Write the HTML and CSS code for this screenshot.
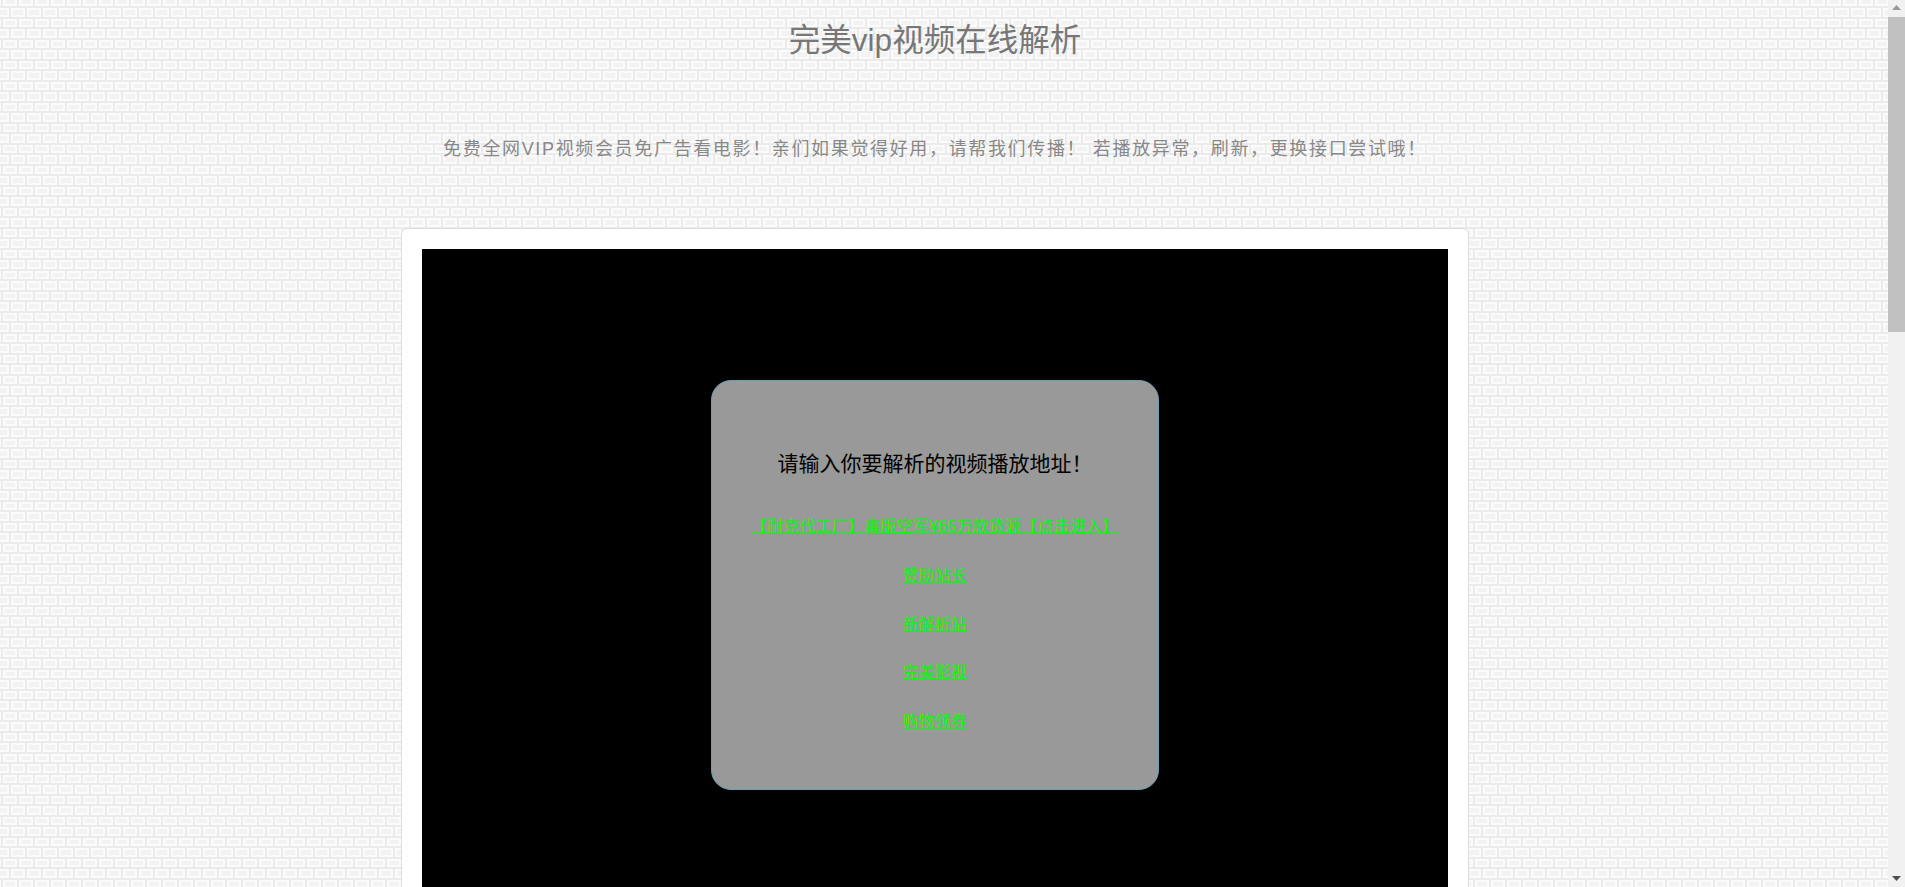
FILE: index.html
```html
<!DOCTYPE html>
<html lang="zh-CN">

<head>
    <meta charset="UTF-8">
    <meta name="viewport" content="width=device-width, initial-scale=1.0">
    <title>完美vip视频在线解析</title>
    <link rel="stylesheet" href="styles.css">
</head>

<body>
    <div class="wrap">
        <h1 class="title">完美vip视频在线解析</h1>
        <p class="desc">免费全网VIP视频会员免广告看电影！亲们如果觉得好用，请帮我们传播！ 若播放异常，刷新，更换接口尝试哦！</p>
        <div class="card">
            <div class="player">
                <div class="notice">
                    <h2 class="notice-title">请输入你要解析的视频播放地址！</h2>
                    <a href="#" class="notice-link">【耐克代工厂】毒版空军¥65万款货源【点击进入】</a>
                    <a href="#" class="notice-link">赞助站长</a>
                    <a href="#" class="notice-link">新解析站</a>
                    <a href="#" class="notice-link">完美影视</a>
                    <a href="#" class="notice-link">购物领券</a>
                </div>
            </div>
        </div>
    </div>
    <!-- 截图里的滚动条 -->
    <div class="scrollbar">
        <svg class="scroll-arrow" width="17" height="17" viewBox="0 0 17 17"><path d="M8.5 5L13 10H4z" fill="#999"/></svg>
        <div class="scroll-thumb"></div>
        <div class="scroll-rest"></div>
        <svg class="scroll-arrow" width="17" height="17" viewBox="0 0 17 17"><path d="M4 6H13L8.5 11z" fill="#505050"/></svg>
    </div>
</body>

</html>
```

FILE: styles.css
```css
* {
    padding: 0;
    margin: 0;
    box-sizing: border-box;
}

body {
    font-family: "Liberation Sans", "Noto Sans CJK SC", sans-serif;
    background-color: #f3f3f3;
    /* 砖墙底纹 */
    background-image: url("data:image/svg+xml,%3Csvg xmlns='http://www.w3.org/2000/svg' width='32' height='21'%3E%3Cpath d='M0 0H32V21H0z' fill='%23ebebeb'/%3E%3Cpath d='M11 8H25V17H11zM27 8H32V17H27zM0 8H9V17H0zM3 19H17V21H3zM19 19H32V21H19zM3 0H17V6H3zM19 0H32V6H19zM0 0H1V6H0zM0 19H1V21H0z' fill='%23fbfbfb'/%3E%3Cpath d='M13 10H23V15H13zM29 10H32V15H29zM0 10H7V15H0zM5 0H15V4H5zM21 0H31V4H21z' fill='%23f3f3f3'/%3E%3C/svg%3E");
}

.wrap {
    width: 1870px;
    padding-top: 20px;
    display: flex;
    flex-direction: column;
    align-items: center;
}

.title {
    font-size: 31.5px;
    font-weight: normal;
    line-height: 40px;
    color: #777;
}

.desc {
    margin-top: 69px;
    font-size: 18px;
    line-height: 40px;
    letter-spacing: 1.65px;
    color: #888;
}

.card {
    width: 1068px;
    margin-top: 59px;
    padding: 20px;
    background: #fff;
    border: 1px solid #ddd;
    border-radius: 6px;
}

.player {
    height: 672px;
    background: #000;
    display: flex;
    align-items: center;
    justify-content: center;
}

.notice {
    width: 448px;
    height: 410px;
    padding-top: 69px;
    background: #999;
    border: 1px solid #6c9fb3;
    border-radius: 20px;
    display: flex;
    flex-direction: column;
    align-items: center;
    gap: 26.5px;
}

.notice-title {
    font-size: 21px;
    font-weight: normal;
    line-height: 28px;
    margin-bottom: 11px;
    color: #000;
}

.notice-link {
    font-size: 16px;
    line-height: 22px;
    color: #0f0;
}

.notice-link:first-of-type {
    margin-bottom: 1px;
    letter-spacing: 0.2px;
}

.scrollbar {
    position: fixed;
    top: 0;
    right: 0;
    bottom: 0;
    width: 17px;
    background: #f1f1f1;
    display: flex;
    flex-direction: column;
}

.scroll-arrow {
    display: block;
    flex: none;
}

.scroll-thumb {
    flex: none;
    height: 315px;
    background: #c1c1c1;
}

.scroll-rest {
    flex: 1;
}
```
